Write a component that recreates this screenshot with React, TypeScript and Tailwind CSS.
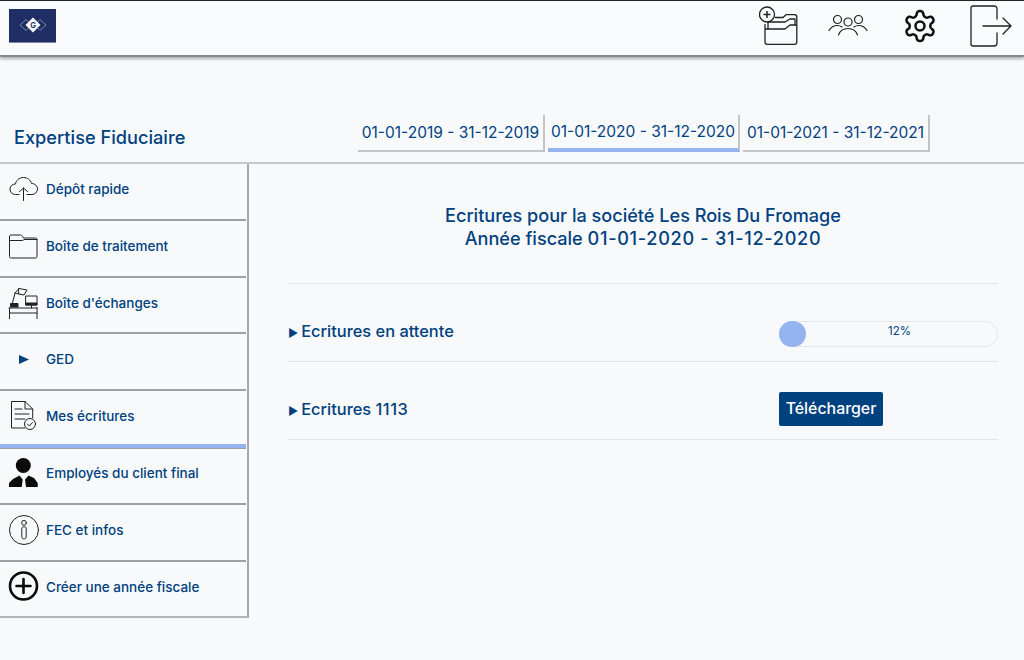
import React from "react";

const Stroke = ({ children, w = 1, size = 32, vb = "0 0 32 32" }: { children: React.ReactNode; w?: number; size?: number; vb?: string }) => (
  <svg width={size} height={size} viewBox={vb} fill="none" stroke="#222" strokeWidth={w} strokeLinecap="round" strokeLinejoin="round">
    {children}
  </svg>
);

const Cloud = () => (
  <Stroke>
    <path d="M11 21.500H7.500C4 21.500 2 19 2 16C2 13 4.500 11 7.500 11C8 7.500 11 4.500 15.500 4.500C19.500 4.500 22.500 7 23.500 10.500C27 10.500 29.500 13 29.500 16C29.500 19 27 21.500 24 21.500H19" />
    <path d="M15.500 27.500V15M11.500 18.500L15.500 15L19.500 18.500" />
  </Stroke>
);
const Folder = () => (
  <Stroke>
    <path d="M1.500 6.500C1.500 5.500 2 5 3 5H12.500C13.500 5 14 5.500 15 7L15.500 8H27.500C28.500 8 29 8.500 29 9.500V26.500C29 27.500 28.500 28 27.500 28H3C2 28 1.500 27.500 1.500 26.500V6.500Z" />
    <path d="M1.500 10.500H13C14.500 10.500 15 10.500 16 9.500H29" />
  </Stroke>
);
const Desk = () => (
  <Stroke>
    <path d="M1 21H29.500M1.500 21V32M29 21V32M1.500 26H29" />
    <path d="M2.500 20V16.500H10V20M4.500 16L7 6L11 1.500M7 6L11 7" />
    <path d="M11 1.500L19 3L16 8L11 7Z" />
    <path d="M18 9H29V18H18ZM23.500 18V21" />
    <rect x="18" y="16" width="11" height="2" fill="#222" />
    <rect x="3" y="17" width="6.500" height="3" fill="#222" />
  </Stroke>
);
const Doc = () => (
  <Stroke>
    <path d="M17 28H3.500V1.500H17L24.700 9V18" />
    <path d="M17 1.500V9H24.700M7 9H14M7 14H21M7 19H17" />
    <circle cx="22" cy="24" r="5.500" fill="#f8f9fb" />
    <path d="M19.500 24L21.300 26L24.500 22.500" />
  </Stroke>
);
const Person = () => (
  <svg width="32" height="32" viewBox="0 0 32 32" fill="#0b0b0b">
    <circle cx="15.300" cy="8.500" r="7.500" />
    <path d="M1 30V26L5 22L11.500 18.500L14.700 22.500L13.700 30ZM29.700 30H18L17 22.500L20.500 18.500L26 21L29.700 26Z" />
  </svg>
);
const Info = () => (
  <Stroke>
    <circle cx="16" cy="16" r="14.500" />
    <circle cx="16" cy="8.800" r="2.400" />
    <path d="M13.800 14C13.800 13 15 12.800 16 12.800C17 12.800 18.200 13 18.200 14V23C18.200 24.500 17 25 16 25C15 25 13.800 24.500 13.800 23Z" />
  </Stroke>
);
const Plus = () => (
  <Stroke w={2.600} vb="0 1 32 32">
    <circle cx="15.500" cy="16" r="13.500" stroke="#0b0b0b" />
    <path d="M8.500 16H22.500M15.500 9V23" stroke="#0b0b0b" />
  </Stroke>
);
const Arrow = () => (
  <svg width="32" height="32" viewBox="0 0 32 32">
    <path d="M11 12V21L21 16.500Z" fill="#00417f" />
  </svg>
);

const navItems: { label: string; icon: React.ReactNode; active?: boolean }[] = [
  { label: "Dépôt rapide", icon: <Cloud /> },
  { label: "Boîte de traitement", icon: <Folder /> },
  { label: "Boîte d'échanges", icon: <Desk /> },
  { label: "GED", icon: <Arrow /> },
  { label: "Mes écritures", icon: <Doc />, active: true },
  { label: "Employés du client final", icon: <Person /> },
  { label: "FEC et infos", icon: <Info /> },
  { label: "Créer une année fiscale", icon: <Plus /> },
];

const tabs = [
  { label: "01-01-2019 - 31-12-2019", w: "w-[187px]" },
  { label: "01-01-2020 - 31-12-2020", w: "w-[192px]", active: true },
  { label: "01-01-2021 - 31-12-2021", w: "w-[187px]" },
];

export default function App() {
  return (
    <div className="w-[1024px] h-[660px] overflow-hidden bg-[#f8f9fb] text-[#00417f] font-['Inter','Liberation_Sans',sans-serif]">
      <header className="h-[57px] bg-[#fafbfc] border-t border-t-[#222] border-b-2 border-b-[#8a8a8a] shadow-[0_2px_3px_rgba(0,0,0,0.3)] flex items-center">
        <div className="ml-[9px] mb-[5px] w-[47px] h-[34px] bg-[#1f2f66] border-b border-[#7d86a8] flex items-center justify-center">
          <svg width="32" height="18" viewBox="0 0 32 18">
            <path d="M9 3.500L3 9L9 14.500M23 3.500L29 9L23 14.500M9 3.500L14 8.500M9 14.500L14 9.500M23 3.500L18 8.500M23 14.500L18 9.500" fill="none" stroke="#7d86a8" strokeWidth="1" />
            <path d="M16 1.500L23.500 9L16 16.500L8.500 9Z" fill="#fff" />
            <text x="16" y="11.500" textAnchor="middle" fontSize="7.500" fontWeight="700" fill="#1f2f66" fontFamily="Inter, sans-serif">G</text>
          </svg>
        </div>
        <div className="ml-auto flex items-center">
          <div className="mr-[28px] mb-[6px]">
            <svg width="40" height="40" viewBox="0 0 40 40" fill="none" stroke="#222" strokeWidth="1.300" strokeLinejoin="round">
              <path d="M6 19V37C6 38.300 7 39.300 8.300 39.300H35.500C36.800 39.300 37.800 38.300 37.800 37V12C37.800 10.700 36.800 9.700 35.500 9.700H27L24 12.500H16" />
              <path d="M6 24H26L31 20H37.800" />
              <path d="M9 24V17H26L31 14H36V20" />
              <circle cx="8" cy="9.500" r="7.500" fill="#fafbfc" />
              <path d="M4.500 9.500H11.500M8 6V13" strokeWidth="1.500" />
            </svg>
          </div>
          <div className="mr-[33px] mb-[4px]">
            <svg width="42" height="24" viewBox="0 0 42 24" fill="none" stroke="#222" strokeWidth="1.200" strokeLinecap="round">
              <circle cx="10.500" cy="5.500" r="4" />
              <circle cx="21" cy="8" r="4" />
              <circle cx="31.500" cy="5.500" r="4" />
              <path d="M2 16.500C4 13 7 11.500 10.500 11.500C12 11.500 13.500 12 15 13M40 16.500C38 13 35 11.500 31.500 11.500C30 11.500 28.500 12 27 13M11.500 21C13 16.500 17 14.500 21 14.500C25 14.500 29 16.500 30.500 21" />
            </svg>
          </div>
          <div className="mr-[32px] mb-[4px]">
            <svg width="36" height="36" viewBox="0 0 24 24" fill="none" stroke="#111" strokeWidth="1.700" strokeLinecap="round" strokeLinejoin="round">
              <path d="M12.220 2h-.44a2 2 0 0 0-2 2v.18a2 2 0 0 1-1 1.730l-.43.25a2 2 0 0 1-2 0l-.15-.08a2 2 0 0 0-2.730.73l-.22.38a2 2 0 0 0 .73 2.730l.15.1a2 2 0 0 1 1 1.720v.51a2 2 0 0 1-1 1.740l-.15.09a2 2 0 0 0-.73 2.730l.22.38a2 2 0 0 0 2.730.73l.15-.08a2 2 0 0 1 2 0l.43.25a2 2 0 0 1 1 1.730V20a2 2 0 0 0 2 2h.44a2 2 0 0 0 2-2v-.18a2 2 0 0 1 1-1.730l.43-.25a2 2 0 0 1 2 0l.15.08a2 2 0 0 0 2.730-.73l.22-.39a2 2 0 0 0-.73-2.730l-.15-.08a2 2 0 0 1-1-1.740v-.5a2 2 0 0 1 1-1.740l.15-.09a2 2 0 0 0 .73-2.730l-.22-.38a2 2 0 0 0-2.730-.73l-.15.08a2 2 0 0 1-2 0l-.43-.25a2 2 0 0 1-1-1.730V4a2 2 0 0 0-2-2z" />
              <circle cx="12" cy="12" r="3" />
            </svg>
          </div>
          <div className="mr-[12px] mb-[4px]">
            <svg width="42" height="42" viewBox="0 0 42 42" fill="none" stroke="#222" strokeWidth="1.300" strokeLinecap="round" strokeLinejoin="round">
              <path d="M27 14V4C27 2 26 1 24 1H3C1.500 1 1 2 1 3V39C1 40.500 1.500 41 3 41H24C26 41 27 40 27 38V28" />
              <path d="M13 21H41M33 13L41 21L33 29" />
            </svg>
          </div>
        </div>
      </header>

      <div className="h-[107px] border-b-2 border-[#c8c9cc] flex items-end">
        <div className="w-[358px] pl-[14px] pb-[13px] text-[18.200px] leading-[24px] font-medium">Expertise Fiduciaire</div>
        <div className="flex gap-[3px] pb-[10px]">
          {tabs.map((t) => (
            <div
              key={t.label}
              className={`${t.w} h-[37px] flex items-center justify-center text-[15.500px] whitespace-nowrap border-r-2 border-r-[#c4c4c4] ${t.active ? "border-b-4 border-b-[#94b3ef]" : "border-b-2 border-b-[#c4c4c4]"}`}
            >
              {t.label}
            </div>
          ))}
        </div>
      </div>

      <div className="flex">
        <nav className="w-[249px] h-[454px] border-r-2 border-r-[#a9a9a9] border-b-2 border-b-[#b5b5b5] pr-[1px]">
          {navItems.map((n, i) => (
            <div
              key={n.label}
              className={`h-[56.800px] flex items-start ${i === 7 ? "" : n.active ? "border-b-4 border-b-[#94b3ef] shadow-[0_1px_0_#9f9f9f]" : "border-b-2 border-b-[#9f9f9f]"}`}
            >
              <div className="w-[46px] pl-[8px] pt-[9px] shrink-0">{n.icon}</div>
              <div className="text-[13.500px] leading-[20px] pt-[15px] font-medium">{n.label}</div>
            </div>
          ))}
        </nav>

        <main className="flex-1 pl-[39px] pr-[26px]">
          <div className="pt-[40px] h-[120px] border-b border-[#e4e5e8] text-center text-[18.100px] leading-[23px] font-medium">
            <div>Ecritures pour la société Les Rois Du Fromage</div>
            <div>
              Année fiscale <span className="tracking-[0.7px]">01-01-2020 - 31-12-2020</span>
            </div>
          </div>
          <div className="h-[78px] pt-[18px] border-b border-[#e4e5e8] flex items-center">
            <div className="w-[491px] text-[16.400px] font-medium">
              <span className="text-[11px] mr-[3px]">►</span>Ecritures en attente
            </div>
            <div className="relative mt-[4px] w-[219px] h-[26px] rounded-full border border-[#e4e6ea] pl-[22px] text-center text-[11.500px] leading-[19px]">
              12%
              <div className="absolute -left-px -top-px w-[27px] h-[26px] rounded-full bg-[#94b3ef]" />
            </div>
          </div>
          <div className="h-[78px] pt-[18px] border-b border-[#e4e5e8] flex items-center">
            <div className="w-[491px] text-[16.400px] font-medium">
              <span className="text-[11px] mr-[3px]">►</span>Ecritures <span className="tracking-[0.5px]">1113</span>
            </div>
            <div className="mb-[2px] w-[104px] h-[34px] bg-[#00417f] text-white rounded-[2px] flex items-center justify-center text-[15.900px] font-medium">
              Télécharger
            </div>
          </div>
        </main>
      </div>
    </div>
  );
}
